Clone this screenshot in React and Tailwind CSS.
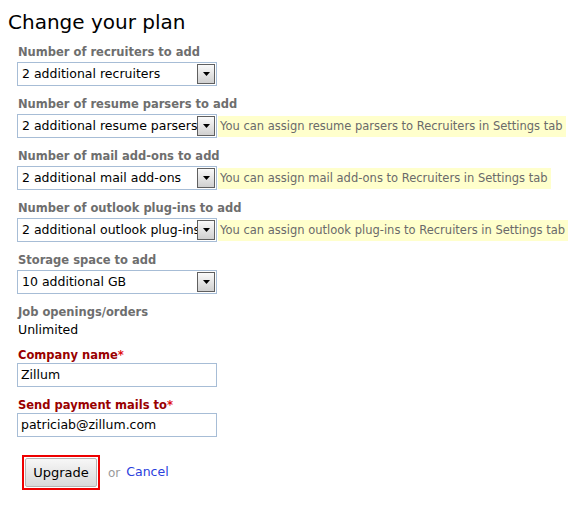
// Change your plan — recreated form with fake dropdowns
function Arrow() {
  return (
    <span className="absolute right-[1px] top-[1px] bottom-[1px] w-[18px] border border-[#5f5f5f] bg-gradient-to-b from-[#fafafa] to-[#d0d0d0] flex items-center justify-center">
      <svg width="7" height="4" viewBox="0 0 7 4">
        <path d="M0 0h7L3.5 4z" fill="#000" />
      </svg>
    </span>
  )
}

function Select({ value }) {
  return (
    <div className="relative shrink-0 w-[200px] h-6 border border-[#a7bdd6] bg-white pl-[4px] pr-[19px] text-[12.5px] leading-[22px] text-black whitespace-nowrap overflow-hidden">
      {value}
      <Arrow />
    </div>
  )
}

function Field({ label, value, hint }) {
  return (
    <div className="mb-[10px]">
      <div className="pl-px text-[11.5px] leading-4 font-bold text-[#6e6e6e] mb-[2px]">{label}</div>
      <div className="flex items-center">
        <Select value={value} />
        {hint && (
          <span className="ml-px h-[21px] bg-[#ffffcc] pl-[2px] pr-[3px] text-[11.5px] leading-[21px] text-[#6a6a6a] whitespace-nowrap">
            {hint}
          </span>
        )}
      </div>
    </div>
  )
}

function TextInput({ label, value }) {
  return (
    <div className="mb-[10px]">
      <div className="pl-px text-[11.5px] leading-4 font-bold text-[#990000]">
        {label}<span className="text-[#e01010]">*</span>
      </div>
      <div className="w-[200px] h-[24px] border border-[#a7bdd6] bg-white pl-[3px] text-[12.5px] leading-[22px] text-black">
        {value}
      </div>
    </div>
  )
}

export default function App() {
  return (
    <div className="w-[580px] h-[508px] bg-white font-['DejaVu_Sans',Verdana,sans-serif]">
      <h1 className="pl-[8px] pt-[10px] text-[20px] leading-6 text-black">Change your plan</h1>
      <div className="pl-[17px] pt-[10px]">
        <Field label="Number of recruiters to add" value="2 additional recruiters" />
        <Field
          label="Number of resume parsers to add"
          value="2 additional resume parsers"
          hint="You can assign resume parsers to Recruiters in Settings tab"
        />
        <Field
          label="Number of mail add-ons to add"
          value="2 additional mail add-ons"
          hint="You can assign mail add-ons to Recruiters in Settings tab"
        />
        <Field
          label="Number of outlook plug-ins to add"
          value="2 additional outlook plug-ins"
          hint="You can assign outlook plug-ins to Recruiters in Settings tab"
        />
        <Field label="Storage space to add" value="10 additional GB" />

        <div className="pl-px text-[11.5px] leading-4 font-bold text-[#6e6e6e] mb-[2px]">Job openings/orders</div>
        <div className="pl-px text-[12.5px] leading-4 text-black mb-[9px]">Unlimited</div>

        <TextInput label="Company name" value="Zillum" />
        <TextInput label="Send payment mails to" value="patriciab@zillum.com" />

        <div className="flex items-center mt-[18px] pl-[5px]">
          <div className="border-2 border-[#ee0000] p-px">
            <button className="w-[72px] h-[29px] border border-[#b5b5b5] rounded-[2px] bg-gradient-to-b from-[#f7f7f7] to-[#d9d9d9] text-[13px] text-black">
              Upgrade
            </button>
          </div>
          <span className="ml-[8px] text-[12px] text-[#9a9a9a]">or</span>
          <a className="ml-[6px] text-[12.5px] text-[#2a40dd]">Cancel</a>
        </div>
      </div>
    </div>
  )
}
